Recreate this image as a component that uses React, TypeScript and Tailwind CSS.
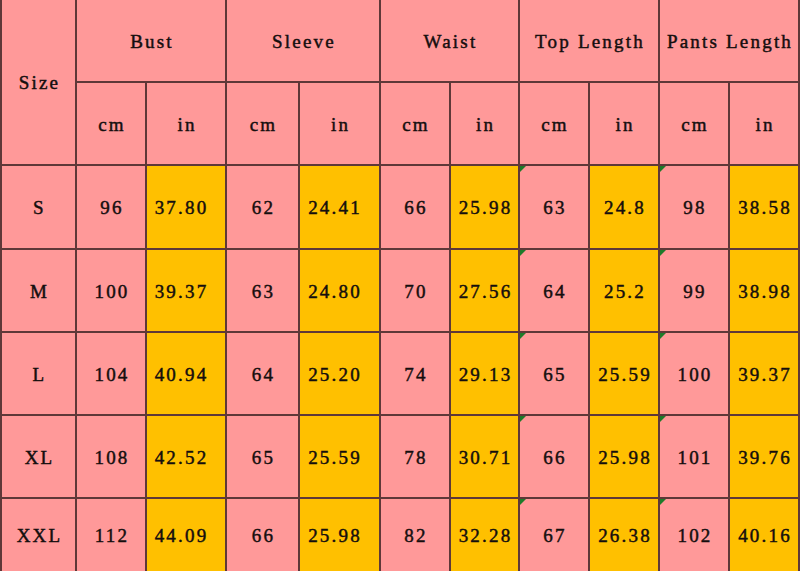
const groups = ["Bust", "Sleeve", "Waist", "Top Length", "Pants Length"];

const rows: { size: string; values: string[] }[] = [
  { size: "S", values: ["96", "37.80", "62", "24.41", "66", "25.98", "63", "24.8", "98", "38.58"] },
  { size: "M", values: ["100", "39.37", "63", "24.80", "70", "27.56", "64", "25.2", "99", "38.98"] },
  { size: "L", values: ["104", "40.94", "64", "25.20", "74", "29.13", "65", "25.59", "100", "39.37"] },
  { size: "XL", values: ["108", "42.52", "65", "25.59", "78", "30.71", "66", "25.98", "101", "39.76"] },
  { size: "XXL", values: ["112", "44.09", "66", "25.98", "82", "32.28", "67", "26.38", "102", "40.16"] },
];

const font =
  "font-['Liberation_Serif',serif] text-[19px] tracking-[2.2px] text-[#140e0e] [-webkit-text-stroke:0.45px_#140e0e]";

function Cell({ children, yellow = false, flag = false, shift = false }: { children: React.ReactNode; yellow?: boolean; flag?: boolean; shift?: boolean }) {
  return (
    <div className={`relative flex items-center justify-center pl-[2px] pt-[3px] ${yellow ? "bg-[#ffc000]" : "bg-[#ff9999]"} ${shift ? "pr-[11px]" : ""}`}>
      {flag && <span className="absolute left-0 top-0 h-0 w-0 border-t-[6px] border-r-[6px] border-t-[#1e7a2a] border-r-transparent" />}
      {children}
    </div>
  );
}

export default function App() {
  return (
    <div className="h-[571px] w-[800px] overflow-hidden bg-white">
      <div
        className={`grid h-[571px] grid-cols-[73px_68px_78px_71px_79px_68px_67px_68px_68px_68px_68px] grid-rows-[81px_81px_82px_81px_81px_81px_72px] gap-[2px] bg-[#5e3838] px-[2px] ${font}`}
      >
        <div className="row-span-2 flex items-center justify-center bg-[#ff9999] pl-[2px] pt-[3px]">Size</div>
        {groups.map((g) => (
          <div key={g} className="col-span-2 flex items-center justify-center bg-[#ff9999] pl-[2px] pt-[3px]">
            {g}
          </div>
        ))}
        {groups.map((g) => [
          <Cell key={g + "cm"}>cm</Cell>,
          <Cell key={g + "in"}>in</Cell>,
        ])}
        {rows.map((r) => [
          <Cell key={r.size}>{r.size}</Cell>,
          ...r.values.map((v, i) => (
            <Cell key={r.size + i} yellow={i % 2 === 1} flag={i === 6 || i === 8} shift={i === 1 || i === 3}>
              {v}
            </Cell>
          )),
        ])}
      </div>
    </div>
  );
}
